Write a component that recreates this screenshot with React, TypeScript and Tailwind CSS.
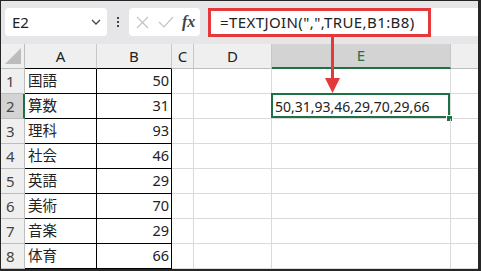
import React from "react"

const rows = [
  ["国語", 50],
  ["算数", 31],
  ["理科", 93],
  ["社会", 46],
  ["英語", 29],
  ["美術", 70],
  ["音楽", 29],
  ["体育", 66],
]

const font = { fontFamily: '"Noto Sans", "Noto Sans CJK JP", sans-serif' }

function Toolbar() {
  return (
    <div className="flex h-[43px] items-start bg-[#e6e6e9] pl-[4px] pt-[7px]">
      {/* name box */}
      <div className="flex h-[28px] w-[102px] items-center justify-between rounded-[4px] bg-white pl-[7px] pr-[6px]">
        <span className="text-[15px] text-[#222]">E2</span>
        <svg width="10" height="6" viewBox="0 0 10 6" fill="none">
          <path d="M1 1l4 4 4-4" stroke="#444" strokeWidth="1.3" />
        </svg>
      </div>
      <div className="flex h-[28px] w-[22px] flex-col items-center justify-center gap-[2px]">
        <span className="h-[2px] w-[2px] bg-[#444]" />
        <span className="h-[2px] w-[2px] bg-[#444]" />
        <span className="h-[2px] w-[2px] bg-[#444]" />
      </div>
      {/* cancel / enter / fx */}
      <div className="flex h-[28px] w-[71px] items-center rounded-[4px] bg-white pl-[6px]">
        <svg width="13" height="13" viewBox="0 0 13 13" className="ml-px">
          <path d="M1 1l11 11M12 1L1 12" stroke="#c4c4c4" strokeWidth="1.2" />
        </svg>
        <svg width="16" height="12" viewBox="0 0 16 12" className="ml-[9px]">
          <path d="M1 6l5 5L15 1" stroke="#c4c4c4" strokeWidth="1.2" fill="none" />
        </svg>
        <span
          className="ml-[8px] text-[16px] font-bold italic text-[#444]"
          style={{ fontFamily: '"Liberation Serif", serif' }}
        >
          fx
        </span>
      </div>
      {/* formula bar */}
      <div className="ml-[8px] h-[28px] flex-1 bg-white">
        <div className="flex h-[29px] w-[223px] items-center border-[3px] border-[#e5383b] pl-[9px] text-[15px] tracking-[0.4px] text-[#222]">
          =TEXTJOIN(",",TRUE,B1:B8)
        </div>
      </div>
    </div>
  )
}

function Sheet() {
  const cols = ["A", "B", "C", "D", "E", ""]
  return (
    <div className="grid grid-cols-[24px_72px_75px_22px_78px_179px_27px] grid-rows-[25px_repeat(8,25px)] text-[14.5px] text-[#222]">
      {/* corner */}
      <div className="relative border-b border-r border-[#bdbdbd] bg-[#efefef]">
        <svg width="16" height="16" viewBox="0 0 16 16" className="absolute bottom-[4px] right-[3px]">
          <polygon points="16,0 16,16 0,16" fill="#bcbcbc" />
        </svg>
      </div>
      {cols.map((c, i) => {
        const sel = c === "E"
        const black = c === "A" || c === "B"
        return (
          <div
            key={i}
            className={
              "flex items-center justify-center text-[15px] " +
              (sel
                ? "border-b-2 border-r border-b-[#1e7145] border-r-[#c8c8c8] bg-[#d3d3d3] text-[#1e7145]"
                : black
                ? "border-b border-r border-b-black border-r-[#c8c8c8] bg-[#efefef]"
                : i === 5
                ? "border-b border-[#bdbdbd] bg-[#efefef]"
                : "border-b border-r border-b-[#bdbdbd] border-r-[#c8c8c8] bg-[#efefef]")
            }
          >
            {c}
          </div>
        )
      })}
      {rows.map(([name, n], r) => {
        const sel = r === 1
        return (
          <React.Fragment key={r}>
            <div
              className={
                "flex items-center pl-[5px] text-[15px] " +
                (sel
                  ? "border-b border-r-2 border-b-[#bdbdbd] border-r-[#1e7145] bg-[#d3d3d3] text-[#444]"
                  : "border-b border-r border-[#bdbdbd] bg-[#efefef] text-[#444]")
              }
            >
              {r + 1}
            </div>
            <div className="flex items-center border-b border-r border-black pl-[3px]">{name}</div>
            <div className="flex items-center justify-end border-b border-r border-black pr-[2px]">{n}</div>
            <div className="border-b border-r border-[#dadada]" />
            <div className="border-b border-r border-[#dadada]" />
            <div className="relative flex items-center border-b border-r border-[#dadada] pl-[3px]">
              {sel && (
                <>
                  <span className="text-[14px]">50,31,93,46,29,70,29,66</span>
                  <div className="absolute -left-px -top-px bottom-0 right-0 border-2 border-[#1e7145]" />
                  <div className="absolute bottom-[-3px] right-[-2px] h-[5px] w-[5px] bg-[#1e7145] outline outline-1 outline-white" />
                </>
              )}
            </div>
            <div className="border-b border-[#dadada]" />
          </React.Fragment>
        )
      })}
    </div>
  )
}

export default function App() {
  return (
    <div className="h-[271px] w-[481px] bg-[#262626] pb-[2px] pl-px pr-[3px] pt-px" style={font}>
      <div className="relative flex h-full flex-col overflow-hidden bg-white">
        <Toolbar />
        <Sheet />
        {/* annotation arrow */}
        <svg width="15" height="56" viewBox="0 0 15 56" className="absolute left-[324px] top-[36px]">
          <rect x="6" y="0" width="3" height="42" fill="#e5383b" />
          <polygon points="0,41 15,41 7.5,56" fill="#e5383b" />
        </svg>
      </div>
    </div>
  )
}
